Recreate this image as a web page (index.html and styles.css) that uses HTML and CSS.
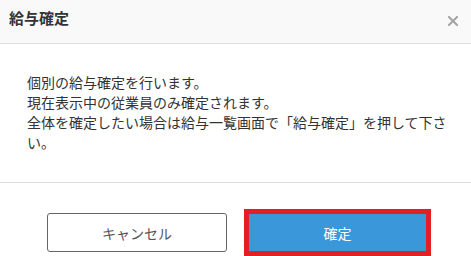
FILE: index.html
```html
<!DOCTYPE html>
<html lang="ja">
<head>
<meta charset="utf-8">
<title>給与確定</title>
<link rel="stylesheet" href="styles.css">
</head>
<body>
<div class="modal">
  <div class="modal-header">
    <h1 class="modal-title">給与確定</h1>
    <button class="close" aria-label="閉じる">
      <svg width="10" height="10" viewBox="0 0 10 10"><path d="M1 1L9 9M9 1L1 9" stroke="#a3a3a3" stroke-width="2" stroke-linecap="square"/></svg>
    </button>
  </div>
  <div class="modal-body">
    <p>個別の給与確定を行います。<br>現在表示中の従業員のみ確定されます。<br>全体を確定したい場合は給与一覧画面で「給与確定」を押して下さい。</p>
  </div>
  <div class="modal-footer">
    <button class="btn btn-cancel">キャンセル</button>
    <button class="btn btn-confirm">確定</button>
  </div>
</div>
</body>
</html>
```
FILE: styles.css
```css
html, body {
  margin: 0;
  padding: 0;
  background: #ffffff;
}
body {
  font-family: "Noto Sans CJK JP", "Noto Sans", sans-serif;
  color: #333333;
}
.modal {
  width: 471px;
}
.modal-header {
  height: 43px;
  box-sizing: content-box;
  background: #f9f9f9;
  border-bottom: 1px solid #dddddd;
  display: flex;
  justify-content: space-between;
  align-items: flex-start;
  padding: 0 13px 0 9px;
}
.modal-title {
  margin: 7px 0 0 0;
  font-size: 15px;
  line-height: 21px;
  font-weight: bold;
  color: #333333;
}
.close {
  margin: 16px 0 0 0;
  padding: 0;
  border: 0;
  background: none;
  width: 10px;
  height: 10px;
  display: block;
}
.close svg {
  display: block;
}
.modal-body {
  padding: 28px 20px 30px 27px;
  border-bottom: 1px solid #dddddd;
}
.modal-body p {
  margin: 0;
  font-size: 14px;
  line-height: 20px;
  color: #333333;
}
.modal-footer {
  display: flex;
  align-items: center;
  gap: 17px;
  padding: 26px 0 0 47px;
}
.btn {
  font-family: "Noto Sans CJK JP", "Noto Sans", sans-serif;
  font-size: 14px;
  margin: 0;
  padding: 0;
  box-sizing: border-box;
  display: flex;
  align-items: center;
  justify-content: center;
}
.btn-cancel {
  width: 180px;
  height: 39px;
  border: 1px solid #666666;
  border-radius: 3px;
  background: #ffffff;
  color: #555555;
}
.btn-confirm {
  width: 187px;
  height: 47px;
  border: 5px solid #e41e26;
  background: #3a98da;
  color: #ffffff;
}
```
